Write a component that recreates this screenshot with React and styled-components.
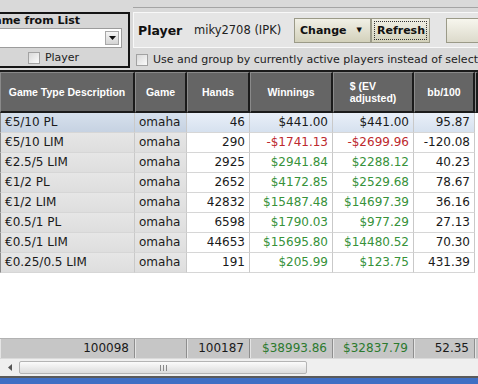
import React from "react";
import styled, { createGlobalStyle, css } from "styled-components";

const Global = createGlobalStyle`
  html, body { margin: 0; padding: 0; background: #d9d9d9; overflow: hidden; }
  * { box-sizing: border-box; }
`;

const App_ = styled.div`
  width: 478px;
  height: 384px;
  overflow: hidden;
  display: flex;
  flex-direction: column;
  font-family: "DejaVu Sans", Verdana, sans-serif;
  color: #111;
  background: #d9d9d9;
`;

const Top = styled.div`
  height: 70px;
  flex: none;
  display: flex;
  align-items: flex-start;
`;

const LeftPanel = styled.div`
  flex: none;
  width: 154px;
  height: 56px;
  margin: 12px 0 0 -24px;
  border: 2px solid #141414;
  background: #d6d6d6;
  padding: 0 6px 0 7px;
  display: flex;
  flex-direction: column;
`;

const PanelTitle = styled.div`
  font-weight: bold;
  font-size: 11px;
  line-height: 13px;
  white-space: nowrap;
  color: #111;
`;

const Combo = styled.div`
  margin-top: 1px;
  height: 20px;
  background: #fff;
  border: 1px solid #9c9c9c;
  display: flex;
  justify-content: flex-end;
  align-items: center;
  padding-right: 2px;
`;

const ComboBtn = styled.div`
  width: 14px;
  height: 14px;
  border: 1px solid #a8a8a8;
  background: linear-gradient(#f6f6f6, #d4d4d4);
  display: flex;
  align-items: center;
  justify-content: center;
`;

const CheckRow = styled.label`
  display: flex;
  align-items: center;
  gap: ${(p) => p.$gap || 5}px;
  font-size: 11px;
  line-height: 13px;
  color: #222;
  white-space: nowrap;
  justify-content: ${(p) => (p.$center ? "center" : "flex-start")};
  margin-top: ${(p) => p.$mt || 0}px;
  margin-left: ${(p) => p.$ml || 0}px;
  overflow: hidden;
`;

const Box = styled.span`
  flex: none;
  width: 12px;
  height: 12px;
  border: 1px solid #a2a2a2;
  background: linear-gradient(135deg, #d9d9d9, #fbfbfb);
`;

const RightPanel = styled.div`
  flex: 1;
  min-width: 0;
  margin: 7px 0 0 3px;
  border-top: 1px solid #a4a4a4;
  display: flex;
  flex-direction: column;
`;

const PlayerBar = styled.div`
  margin-top: 4px;
  height: 36px;
  background: #e5e5e5;
  border: 1px solid #f8f8f8;
  border-right: none;
  display: flex;
  align-items: center;
  padding-left: 4px;
  white-space: nowrap;
`;

const PlayerLabel = styled.span`
  font-weight: bold;
  font-size: 12.5px;
  width: 56px;
  flex: none;
`;

const PlayerName = styled.span`
  font-size: 11.5px;
  width: 100px;
  flex: none;
  color: #222;
`;

const Btn = styled.div`
  flex: none;
  height: 25px;
  width: ${(p) => p.$w}px;
  margin-left: ${(p) => p.$ml || 0}px;
  border: 1px solid #9b9a88;
  background: ${(p) =>
    p.$plain
      ? "linear-gradient(#f7f6ee, #dcdacb)"
      : "linear-gradient(#f1f0e6, #d3d1bb)"};
  font-weight: bold;
  font-size: 11px;
  display: flex;
  align-items: center;
  padding: 2px;
  color: #111;
`;

const BtnInner = styled.div`
  flex: 1;
  height: 100%;
  display: flex;
  align-items: center;
  padding-left: ${(p) => p.$pl || 3}px;
  ${(p) =>
    p.$focus &&
    css`
      border: 1px dotted #333;
    `}
`;

const Caret = styled.span`
  margin-left: 10px;
  font-size: 7px;
`;

const Grid = styled.div`
  flex: 1;
  display: flex;
  flex-direction: column;
  min-height: 0;
  background: #fff;
`;

const COLS = "135px 52px 63px 83px 81px 61px 1fr";

const HeadRow = styled.div`
  display: grid;
  grid-template-columns: ${COLS};
  height: 43px;
  border-top: 2px solid #1b1b1b;
  background: #1b1b1b;
`;

const HeadCell = styled.div`
  background: #656565;
  border-top: 1px solid #8a8a8a;
  border-left: 1px solid #8a8a8a;
  border-right: 2px solid #1b1b1b;
  border-bottom: 2px solid #1b1b1b;
  color: #fff;
  font-family: "Liberation Sans", Arial, sans-serif;
  font-weight: bold;
  font-size: 10.5px;
  line-height: 12px;
  display: flex;
  align-items: center;
  justify-content: center;
  white-space: nowrap;
`;

const HeadText = styled.div`
  text-align: left;
`;

const Row = styled.div`
  display: grid;
  grid-template-columns: ${COLS};
  height: 20px;
  flex: none;
`;

const Cell = styled.div`
  border-right: 1px solid #c9c9c9;
  border-bottom: 1px solid #d6d6d6;
  font-size: 12px;
  line-height: 19px;
  padding: 0 4px 0 ${(p) => (p.$first ? 4 : 4)}px;
  white-space: nowrap;
  overflow: hidden;
  text-align: ${(p) => (p.$num ? "right" : "left")};
  color: ${(p) =>
    p.$tone === "neg" ? "#bd2a2e" : p.$tone === "pos" ? "#37923a" : "#1a1a1a"};
  background: ${(p) =>
    p.$sel
      ? p.$shade
        ? "linear-gradient(#d6e0ec, #c6d2e2)"
        : "linear-gradient(#e9eff8, #d6e1ef)"
      : p.$shade
      ? "linear-gradient(#e6e6e6, #dedede)"
      : "#fff"};
  ${(p) =>
    p.$first &&
    css`
      border-left: 1px solid #8a8a8a;
    `}
  ${(p) =>
    p.$blank &&
    css`
      background: #fff;
      border-bottom: none;
    `}
`;

const Filler = styled.div`
  flex: 1;
  background: #fff;
`;

const FootRow = styled.div`
  display: grid;
  grid-template-columns: ${COLS};
  height: 20px;
  flex: none;
  background: #c6c6c6;
  border-top: 1px solid #b2b2b2;
`;

const FootCell = styled.div`
  border-left: 1px solid #e4e4e4;
  border-right: 1px solid #8e8e8e;
  font-size: 12px;
  line-height: 19px;
  padding: 0 5px;
  text-align: right;
  white-space: nowrap;
  overflow: hidden;
  color: ${(p) => (p.$pos ? "#2c7a2f" : "#1a1a1a")};
`;

const Scroll = styled.div`
  height: 18px;
  flex: none;
  background: #efefef;
  border-top: 1px solid #dadada;
  display: flex;
  align-items: center;
`;

const ScrollArrow = styled.div`
  width: 19px;
  height: 100%;
  display: flex;
  align-items: center;
  justify-content: center;
`;

const Thumb = styled.div`
  width: 288px;
  height: 13px;
  border: 1px solid #b4b4b4;
  border-radius: 2px;
  background: linear-gradient(#fbfbfb, #dcdcdc);
  display: flex;
  align-items: center;
  justify-content: center;
  gap: 2px;
`;

const Grip = styled.span`
  width: 1px;
  height: 6px;
  background: #8a8a8a;
`;

const BottomBar = styled.div`
  height: 8px;
  flex: none;
  border-top: 2px solid #5a5a5a;
  background: #3f6fc4;
`;

const rows = [
  ["€5/10 PL", "omaha", "46", "$441.00", "$441.00", "95.87", true],
  ["€5/10 LIM", "omaha", "290", "-$1741.13", "-$2699.96", "-120.08"],
  ["€2.5/5 LIM", "omaha", "2925", "$2941.84", "$2288.12", "40.23"],
  ["€1/2 PL", "omaha", "2652", "$4172.85", "$2529.68", "78.67"],
  ["€1/2 LIM", "omaha", "42832", "$15487.48", "$14697.39", "36.16"],
  ["€0.5/1 PL", "omaha", "6598", "$1790.03", "$977.29", "27.13"],
  ["€0.5/1 LIM", "omaha", "44653", "$15695.80", "$14480.52", "70.30"],
  ["€0.25/0.5 LIM", "omaha", "191", "$205.99", "$123.75", "431.39"],
];

const tone = (v, sel) => (sel ? "" : v.startsWith("-") ? "neg" : "pos");

export default function App() {
  return (
    <App_>
      <Global />
      <Top>
        <LeftPanel>
          <PanelTitle>Name from List</PanelTitle>
          <Combo>
            <ComboBtn>
              <svg width="7" height="4" viewBox="0 0 7 4">
                <path d="M0 0h7L3.5 4z" fill="#111" />
              </svg>
            </ComboBtn>
          </Combo>
          <CheckRow $center $mt={3}>
            <Box />
            Player
          </CheckRow>
        </LeftPanel>
        <RightPanel>
          <PlayerBar>
            <PlayerLabel>Player</PlayerLabel>
            <PlayerName>miky2708 (IPK)</PlayerName>
            <Btn $w={77}>
              <BtnInner $pl={3}>
                Change<Caret>▼</Caret>
              </BtnInner>
            </Btn>
            <Btn $w={59}>
              <BtnInner $focus $pl={2}>Refresh</BtnInner>
            </Btn>
            <Btn $w={60} $ml={16} $plain />
          </PlayerBar>
          <CheckRow $mt={5} $ml={3} $gap={5}>
            <Box />
            Use and group by currently active players instead of selected player
          </CheckRow>
        </RightPanel>
      </Top>
      <Grid>
        <HeadRow>
          <HeadCell>Game Type Description</HeadCell>
          <HeadCell>Game</HeadCell>
          <HeadCell>Hands</HeadCell>
          <HeadCell>Winnings</HeadCell>
          <HeadCell>
            <HeadText>
              $ (EV
              <br />
              adjusted)
            </HeadText>
          </HeadCell>
          <HeadCell>bb/100</HeadCell>
          <HeadCell />
        </HeadRow>
        {rows.map((r, i) => {
          const sel = !!r[6];
          return (
            <Row key={i}>
              <Cell $first $shade $sel={sel}>{r[0]}</Cell>
              <Cell $shade $sel={sel}>{r[1]}</Cell>
              <Cell $num $sel={sel}>{r[2]}</Cell>
              <Cell $num $sel={sel} $tone={tone(r[3], sel)}>{r[3]}</Cell>
              <Cell $num $sel={sel} $tone={tone(r[4], sel)}>{r[4]}</Cell>
              <Cell $num $sel={sel}>{r[5]}</Cell>
              <Cell $blank />
            </Row>
          );
        })}
        <Filler />
        <FootRow>
          <FootCell>100098</FootCell>
          <FootCell />
          <FootCell>100187</FootCell>
          <FootCell $pos>$38993.86</FootCell>
          <FootCell $pos>$32837.79</FootCell>
          <FootCell>52.35</FootCell>
          <FootCell />
        </FootRow>
        <Scroll>
          <ScrollArrow>
            <svg width="4" height="7" viewBox="0 0 4 7">
              <path d="M4 0v7L0 3.5z" fill="#555" />
            </svg>
          </ScrollArrow>
          <Thumb>
            <Grip />
            <Grip />
            <Grip />
          </Thumb>
        </Scroll>
        <BottomBar />
      </Grid>
    </App_>
  );
}
